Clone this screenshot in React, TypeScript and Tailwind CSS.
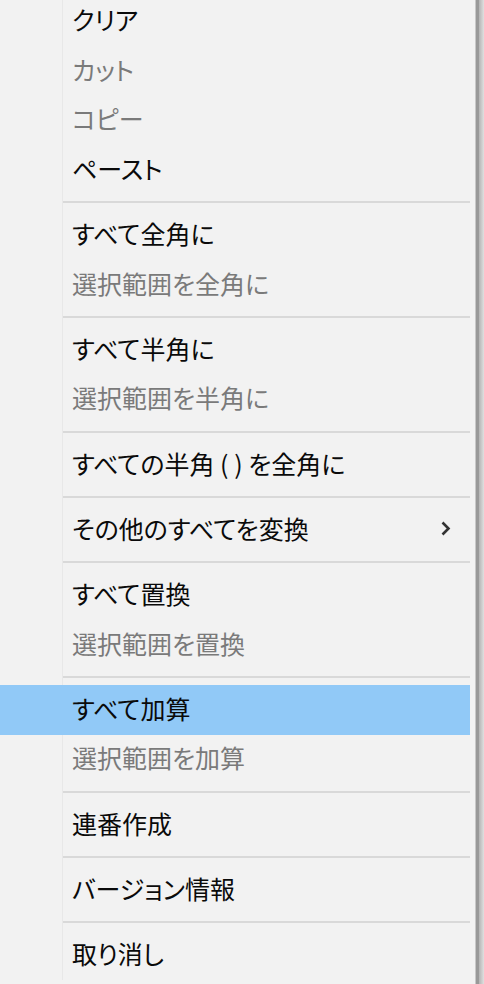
import React from 'react';

type Item =
  | { kind: 'item'; label: string; disabled?: boolean; active?: boolean; sub?: boolean }
  | { kind: 'sep' };

const items: Item[] = [
  { kind: 'item', label: 'クリア' },
  { kind: 'item', label: 'カット', disabled: true },
  { kind: 'item', label: 'コピー', disabled: true },
  { kind: 'item', label: 'ペースト' },
  { kind: 'sep' },
  { kind: 'item', label: 'すべて全角に' },
  { kind: 'item', label: '選択範囲を全角に', disabled: true },
  { kind: 'sep' },
  { kind: 'item', label: 'すべて半角に' },
  { kind: 'item', label: '選択範囲を半角に', disabled: true },
  { kind: 'sep' },
  { kind: 'item', label: 'すべての半角 ( ) を全角に' },
  { kind: 'sep' },
  { kind: 'item', label: 'その他のすべてを変換', sub: true },
  { kind: 'sep' },
  { kind: 'item', label: 'すべて置換' },
  { kind: 'item', label: '選択範囲を置換', disabled: true },
  { kind: 'sep' },
  { kind: 'item', label: 'すべて加算', active: true },
  { kind: 'item', label: '選択範囲を加算', disabled: true },
  { kind: 'sep' },
  { kind: 'item', label: '連番作成' },
  { kind: 'sep' },
  { kind: 'item', label: 'バージョン情報' },
  { kind: 'sep' },
  { kind: 'item', label: '取り消し' },
];

const Chevron = () => (
  <svg width="11" height="17" viewBox="0 0 11 17" className="shrink-0">
    <polyline points="2.5,2.5 8.5,8.5 2.5,14.5" fill="none" stroke="#333333" strokeWidth="2.6" />
  </svg>
);

export default function App() {
  return (
    <div
      className="w-[484px] h-[984px] overflow-hidden bg-[#f2f2f2] flex"
      style={{ fontFamily: '"Noto Sans CJK JP", "Noto Sans", sans-serif', fontFeatureSettings: '"palt"' }}
    >
      {/* menu body */}
      <div className="w-[475px] pr-[5px]">
        <div className="-mt-[3.5px]">
          {items.map((it, idx) =>
            it.kind === 'sep' ? (
              <div key={idx} className="h-[15.75px] flex">
                <div className="w-[62px] shrink-0" />
                <div className="flex-1 border-l border-[#e8e8e8] flex items-center">
                  <div className="w-full h-[2px] bg-[#d9d9d9]" />
                </div>
              </div>
            ) : (
              <div key={idx} className={`h-[49.5px] flex ${it.active ? 'bg-[#91c9f7]' : ''}`}>
                <div className="w-[62px] shrink-0" />
                <div
                  className={`flex-1 flex items-center pl-[9px] pr-[19px] pb-[3px] border-l ${
                    it.active ? 'border-transparent' : 'border-[#e8e8e8]'
                  }`}
                >
                  <span
                    className={`flex-1 text-[25px] leading-none ${
                      it.disabled ? 'text-[#7a7a7a]' : 'text-[#0a0a0a]'
                    }`}
                  >
                    {it.label}
                  </span>
                  {it.sub && <Chevron />}
                </div>
              </div>
            )
          )}
        </div>
      </div>
      {/* border + drop shadow */}
      <div className="w-px bg-[#c8c8c8]" />
      <div className="w-[3px] bg-[#999999]" />
      <div className="flex-1 bg-linear-to-r from-[#b4b4b4] to-[#e0e0e0]" />
    </div>
  );
}
